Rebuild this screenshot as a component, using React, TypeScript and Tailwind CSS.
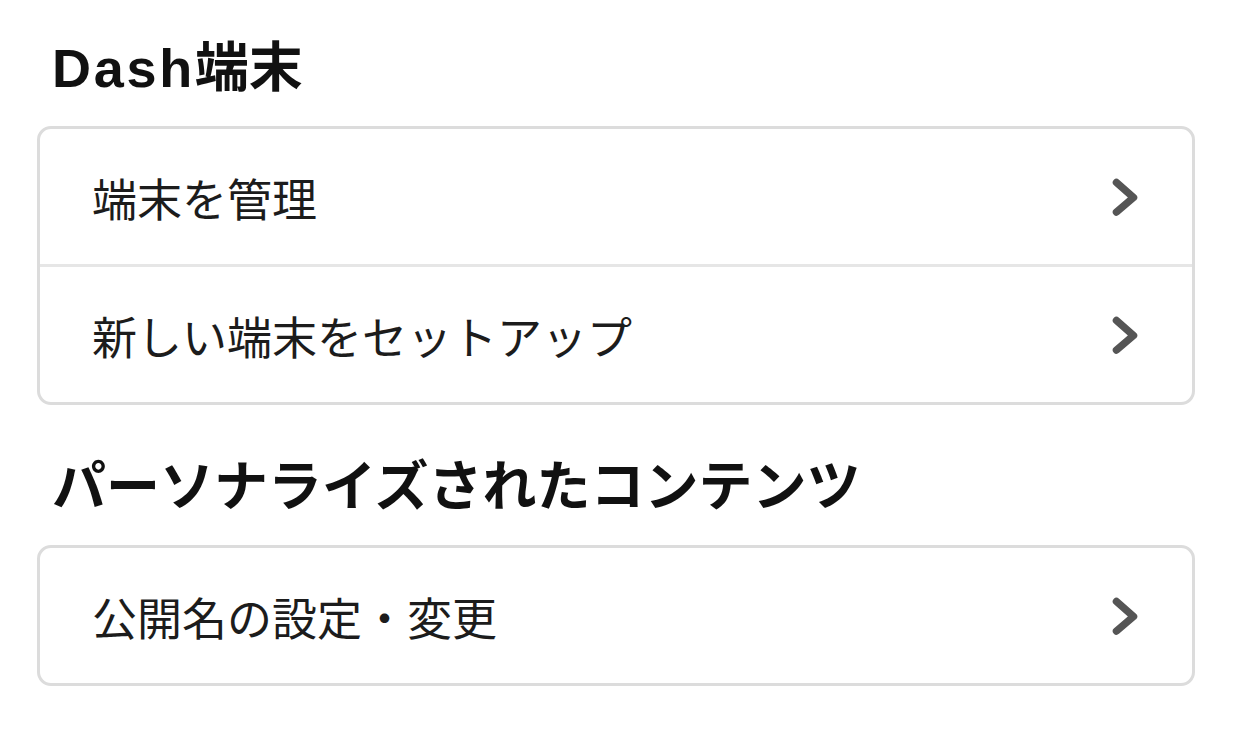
import { ReactNode } from 'react';

const font = { fontFamily: '"Liberation Sans", "Noto Sans CJK JP", sans-serif' };

function Chevron() {
  return (
    <svg width="26" height="38" viewBox="0 0 26 38" className="shrink-0">
      <polyline
        points="4.5,4.5 21.5,19.5 4.5,34"
        fill="none"
        stroke="#555555"
        strokeWidth="7.5"
        strokeLinecap="round"
        strokeLinejoin="round"
      />
    </svg>
  );
}

function Row({ children, last }: { children: ReactNode; last?: boolean }) {
  return (
    <div
      className={`flex items-center justify-between pl-[52px] pr-[54px] ${
        last ? 'h-[135px]' : 'h-[138px] border-b-[3px] border-[#e6e6e6]'
      }`}
    >
      <span className="mt-[9px] text-[45px] leading-none text-[#1c1c1c]">{children}</span>
      <Chevron />
    </div>
  );
}

function Card({ items }: { items: string[] }) {
  return (
    <div className="ml-[37px] w-[1158px] overflow-hidden rounded-[14px] border-[3px] border-[#dcdcdc] bg-white">
      {items.map((item, i) => (
        <Row key={item} last={i === items.length - 1}>
          {item}
        </Row>
      ))}
    </div>
  );
}

function Heading({ children }: { children: ReactNode }) {
  return (
    <h2 className="ml-[52px] flex h-[60px] items-center text-[54px] font-bold leading-none text-[#111111]">
      {children}
    </h2>
  );
}

export default function App() {
  return (
    <div className="min-h-[755px] w-[1237px] bg-white pt-[38px]" style={font}>
      <Heading>
        <span className="tracking-[0.05em]">Dash</span>端末
      </Heading>
      <div className="mt-[28px]">
        <Card items={['端末を管理', '新しい端末をセットアップ']} />
      </div>
      <div className="mt-[52px]">
        <Heading>パーソナライズされたコンテンツ</Heading>
      </div>
      <div className="mt-[28px]">
        <Card items={['公開名の設定・変更']} />
      </div>
    </div>
  );
}
